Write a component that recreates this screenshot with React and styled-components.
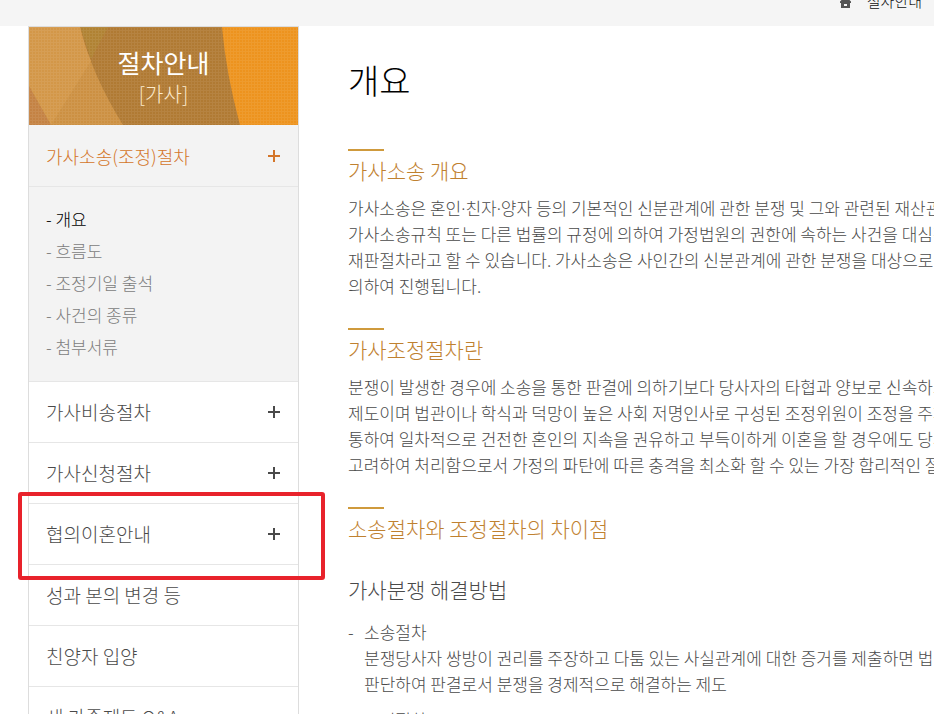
import React from "react";
import styled, { createGlobalStyle } from "styled-components";

const menus = [
	{
		title: "가사소송(조정)절차",
		active: true,
		expandable: true,
		children: ["개요", "흐름도", "조정기일 출석", "사건의 종류", "첨부서류"],
	},
	{ title: "가사비송절차", expandable: true },
	{ title: "가사신청절차", expandable: true },
	{ title: "협의이혼안내", expandable: true, marked: true },
	{ title: "성과 본의 변경 등" },
	{ title: "친양자 입양" },
	{ title: "새 가족제도 Q&A" },
];

const sections = [
	{
		title: "가사소송 개요",
		lines: [
			<>
				가사소송은 혼인<Dot />친자<Dot />양자 등의 기본적인 신분관계에 관한 분쟁 및 그와 관련된 재산관
			</>,
			"가사소송규칙 또는 다른 법률의 규정에 의하여 가정법원의 권한에 속하는 사건을 대심적",
			"재판절차라고 할 수 있습니다. 가사소송은 사인간의 신분관계에 관한 분쟁을 대상으로",
			"의하여 진행됩니다.",
		],
	},
	{
		title: "가사조정절차란",
		lines: [
			"분쟁이 발생한 경우에 소송을 통한 판결에 의하기보다 당사자의 타협과 양보로 신속하고",
			"제도이며 법관이나 학식과 덕망이 높은 사회 저명인사로 구성된 조정위원이 조정을 주재",
			"통하여 일차적으로 건전한 혼인의 지속을 권유하고 부득이하게 이혼을 할 경우에도 당사",
			"고려하여 처리함으로서 가정의 파탄에 따른 충격을 최소화 할 수 있는 가장 합리적인 절",
		],
	},
];

const methods = [
	{
		title: "소송절차",
		lines: [
			"분쟁당사자 쌍방이 권리를 주장하고 다툼 있는 사실관계에 대한 증거를 제출하면 법",
			"판단하여 판결로서 분쟁을 경제적으로 해결하는 제도",
		],
	},
	{ title: "조정절차", lines: [] },
];

function Dot() {
	return <Middot>·</Middot>;
}

function BannerArt() {
	return (
		<svg viewBox="0 0 269 98" preserveAspectRatio="none" aria-hidden="true">
			<defs>
				<pattern id="mesh" width="3" height="3" patternUnits="userSpaceOnUse">
					<path d="M0 0h3v1H1v2H0z" fill="#fff" opacity="0.07" />
				</pattern>
			</defs>
			<rect width="269" height="98" fill="#b07a33" />
			<path d="M51 0H79L62 32Z" fill="#b08233" />
			<path d="M51 0Q63 48 94 98H0V0Z" fill="#cc9042" />
			<path d="M0 0H51Q55 18 62 34L22 98L0 59Z" fill="#d39748" />
			<path d="M0 59L22 98H0Z" fill="#c48243" />
			<path d="M193 0H269V98H211Q197 46 193 0Z" fill="#ed931e" />
			<rect width="269" height="98" fill="url(#mesh)" />
		</svg>
	);
}

function App() {
	return (
		<Page>
			<GlobalStyle />
			<TopBar>
				<HomeLink href="#home" aria-label="홈">
					<svg width="11" height="12" viewBox="0 0 11 12">
						<path
							d="M5.500 0L11 5.500V7H10V12H1V7H0V5.500ZM4 8V10H7V8Z"
							fill="#555"
							fillRule="evenodd"
						/>
					</svg>
				</HomeLink>
				<a href="#guide">절차안내</a>
			</TopBar>
			<Body>
				<Side>
					<Banner>
						<BannerArt />
						<strong>절차안내</strong>
						<span>[가사]</span>
					</Banner>
					<Menu>
						{menus.map((menu) => (
							<MenuItem key={menu.title}>
								<MenuButton $active={menu.active}>
									{menu.title}
									{menu.expandable && (
										<Plus viewBox="0 0 12 12">
											<path d="M5 0h2v5h5v2H7v5H5V7H0V5h5z" />
										</Plus>
									)}
								</MenuButton>
								{menu.children && (
									<SubMenu>
										{menu.children.map((name, i) => (
											<li key={name}>
												<SubLink href="#sub" $current={i === 0}>
													- {name}
												</SubLink>
											</li>
										))}
									</SubMenu>
								)}
								{menu.marked && <Marker />}
							</MenuItem>
						))}
					</Menu>
				</Side>
				<Content>
					<h1>개요</h1>
					{sections.map((section) => (
						<Section key={section.title}>
							<h2>{section.title}</h2>
							<p>
								{section.lines.map((line, i) => (
									<Line key={i}>{line}</Line>
								))}
							</p>
						</Section>
					))}
					<Section>
						<h2>소송절차와 조정절차의 차이점</h2>
						<h3>가사분쟁 해결방법</h3>
						<Methods>
							{methods.map((method) => (
								<li key={method.title}>
									<Line>{method.title}</Line>
									{method.lines.map((line, i) => (
										<Line key={i}>{line}</Line>
									))}
								</li>
							))}
						</Methods>
					</Section>
				</Content>
			</Body>
		</Page>
	);
}

const GlobalStyle = createGlobalStyle`
	* {
		box-sizing: border-box;
	}

	body {
		margin: 0;
		background: #fff;
		color: #4a4a4a;
		font-family: "Noto Sans CJK KR", "Noto Sans", sans-serif;
		font-size: 17px;
		font-weight: 300;
		line-height: 26px;
	}

	h1, h2, h3, p, ul {
		margin: 0;
		padding: 0;
		font-weight: 300;
	}

	ul {
		list-style: none;
	}

	a {
		color: inherit;
		text-decoration: none;
	}
`;

const Page = styled.div`
	height: 100vh;
	overflow: hidden;
`;

const TopBar = styled.header`
	display: flex;
	justify-content: flex-end;
	align-items: flex-start;
	gap: 16px;
	height: 26px;
	padding-right: 12px;
	overflow: hidden;
	background: #f5f5f5;
	color: #111;
	font-size: 15px;
	line-height: 2px;
`;

const HomeLink = styled.a`
	svg {
		display: block;
		margin-top: -4px;
	}
`;

const Body = styled.div`
	display: flex;
	align-items: flex-start;
	gap: 49px;
	padding-left: 28px;
`;

const Side = styled.nav`
	flex: 0 0 271px;
	border: solid #ddd;
	border-width: 1px 1px 0;
`;

const Banner = styled.div`
	position: relative;
	display: flex;
	flex-direction: column;
	align-items: center;
	height: 98px;
	padding-top: 16px;
	color: #fff;

	svg {
		position: absolute;
		inset: 0;
		width: 100%;
		height: 100%;
	}

	strong {
		position: relative;
		font-size: 25px;
		font-weight: 400;
		line-height: 38px;
	}

	span {
		position: relative;
		color: #fdebcd;
		font-size: 20px;
		line-height: 26px;
	}
`;

const Menu = styled.ul`
	border-top: 1px solid #f3f3f3;
`;

const MenuItem = styled.li`
	position: relative;
	border-bottom: 1px solid #e6e6e6;
`;

const MenuButton = styled.button`
	display: flex;
	justify-content: space-between;
	align-items: center;
	width: 100%;
	height: 60px;
	padding: 0 18px 0 17px;
	border: 0;
	background: ${(props) => (props.$active ? "#f3f3f3" : "#fff")};
	color: ${(props) => (props.$active ? "#d4762a" : "#4a4a4a")};
	font: inherit;
	font-size: ${(props) => (props.$active ? "18px" : "19px")};
	text-align: left;
	cursor: pointer;
`;

const Plus = styled.svg`
	width: 12px;
	height: 12px;
	fill: currentColor;
`;

const SubMenu = styled.ul`
	padding: 16px 17px 18px;
	border-top: 1px solid #e6e6e6;
	background: #f3f3f3;
	line-height: 32px;
`;

const SubLink = styled.a`
	color: ${(props) => (props.$current ? "#000" : "#7c7c7c")};
`;

/* highlight frame drawn over the menu */
const Marker = styled.div`
	position: absolute;
	inset: -12px -27px -16px -11px;
	z-index: 1;
	border: 4px solid #e8222b;
	border-radius: 3px;
	pointer-events: none;
`;

const Content = styled.main`
	flex: 1;
	min-width: 0;
	padding-top: 30px;

	h1 {
		color: #000;
		font-size: 34px;
		line-height: 48px;
		margin-bottom: 45px;
	}
`;

const Section = styled.section`
	margin-bottom: 29px;

	&::before {
		content: "";
		display: block;
		width: 36px;
		height: 2px;
		background: #cf9a3c;
	}

	h2 {
		color: #bf8130;
		font-size: 21px;
		line-height: 38px;
		margin-bottom: 6px;
	}

	h3 {
		padding-top: 16px;
		font-size: 21px;
		line-height: 40px;
		margin-bottom: 10px;
	}
`;

const Line = styled.span`
	display: block;
	white-space: nowrap;
`;

const Middot = styled.span`
	font-family: "Noto Sans", sans-serif;
	line-height: 1;
`;

const Methods = styled.ul`
	li {
		position: relative;
		padding-left: 16px;
		margin-bottom: 10px;
	}

	li::before {
		content: "-";
		position: absolute;
		left: 0;
	}
`;

export default App;
